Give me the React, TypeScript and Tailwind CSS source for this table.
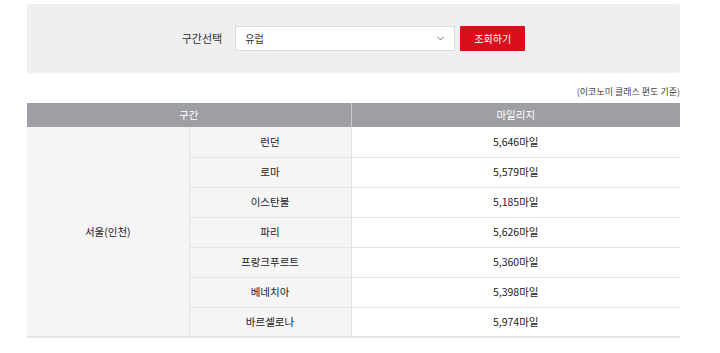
import { FiChevronDown } from 'react-icons/fi';

const rows = [
  { city: '런던', mile: '5,646마일' },
  { city: '로마', mile: '5,579마일' },
  { city: '이스탄불', mile: '5,185마일' },
  { city: '파리', mile: '5,626마일' },
  { city: '프랑크푸르트', mile: '5,360마일' },
  { city: '베네치아', mile: '5,398마일' },
  { city: '바르셀로나', mile: '5,974마일' },
];

export default function App() {
  return (
    <div
      className="min-h-[353px] w-[720px] bg-white text-[#222]"
      style={{ fontFamily: '"Noto Sans CJK KR", "Noto Sans", sans-serif' }}
    >
      <div className="ml-[27px] w-[653px] pt-[4px]">
        <div className="flex h-[69px] items-center justify-center rounded-[3px] bg-[#efefef]">
          <span className="mr-[13px] text-[11px] leading-none text-[#333]">구간선택</span>
          <div className="flex h-[25px] w-[220px] items-center justify-between border border-[#dcdcdc] bg-white pl-[9px] pr-[8px]">
            <span className="text-[10px] text-[#333]">유럽</span>
            <FiChevronDown className="text-[11px] text-[#666]" />
          </div>
          <button className="ml-[5px] h-[25px] w-[65px] rounded-[1px] bg-[#d9101b] text-[10px] text-white">
            조회하기
          </button>
        </div>

        <p className="mt-[12px] text-right text-[9px] leading-[14px] text-[#444]">
          (이코노미 클래스 편도 기준)
        </p>

        <table className="mt-[4px] w-full border-collapse text-[10.5px]">
          <thead>
            <tr className="h-[24px] bg-[#9d9fa4] text-white">
              <th colSpan={2} className="w-[324px] border-r border-[#c8c9cc] font-normal">
                구간
              </th>
              <th className="font-normal">마일리지</th>
            </tr>
          </thead>
          <tbody>
            {rows.map((r, i) => (
              <tr key={r.city} className="h-[30px]">
                {i === 0 && (
                  <td
                    rowSpan={rows.length}
                    className="w-[162px] border-b-2 border-r border-[#e4e4e4] bg-[#f5f5f5] text-center"
                  >
                    서울(인천)
                  </td>
                )}
                <td
                  className={`w-[162px] border-r border-[#e4e4e4] bg-[#f5f5f5] text-center ${i === rows.length - 1 ? 'border-b-2' : 'border-b'}`}
                >
                  {r.city}
                </td>
                <td
                  className={`border-[#e4e4e4] bg-white text-center ${i === rows.length - 1 ? 'border-b-2' : 'border-b'}`}
                >
                  {r.mile}
                </td>
              </tr>
            ))}
          </tbody>
        </table>
      </div>
    </div>
  );
}
